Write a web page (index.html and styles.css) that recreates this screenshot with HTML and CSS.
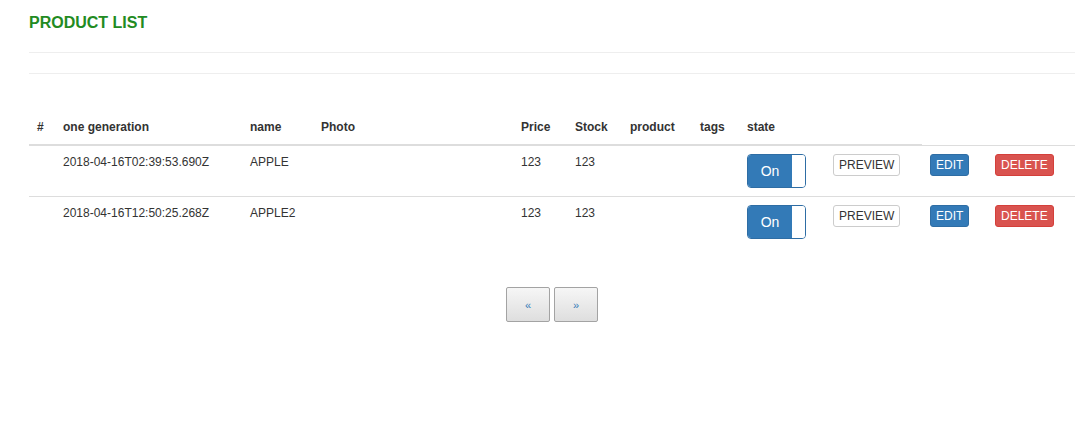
FILE: index.html
```html
<!DOCTYPE html>
<html>
<head>
<meta charset="utf-8">
<link rel="stylesheet" href="styles.css">
</head>
<body>
<div class="page">
  <h4 class="title">PRODUCT LIST</h4>
  <hr class="rule">
  <hr class="rule rule-last">
  <table class="table">
    <colgroup>
      <col class="c-num"><col class="c-date"><col class="c-name"><col class="c-photo"><col class="c-price"><col class="c-stock"><col class="c-product"><col class="c-tags"><col class="c-state"><col class="c-preview"><col class="c-edit"><col class="c-delete">
    </colgroup>
    <thead>
      <tr>
        <th>#</th><th>one generation</th><th>name</th><th class="th-photo">Photo</th><th>Price</th><th>Stock</th><th>product</th><th>tags</th><th>state</th><th></th>
      </tr>
    </thead>
    <tbody>
      <tr>
        <td></td><td>2018-04-16T02:39:53.690Z</td><td>APPLE</td><td></td><td>123</td><td>123</td><td></td><td></td>
        <td><div class="toggle"><span class="toggle-on">On</span><span class="toggle-handle"></span></div></td>
        <td><button class="btn btn-default">PREVIEW</button></td>
        <td><button class="btn btn-primary">EDIT</button></td>
        <td><button class="btn btn-danger">DELETE</button></td>
      </tr>
      <tr>
        <td></td><td>2018-04-16T12:50:25.268Z</td><td>APPLE2</td><td></td><td>123</td><td>123</td><td></td><td></td>
        <td><div class="toggle"><span class="toggle-on">On</span><span class="toggle-handle"></span></div></td>
        <td><button class="btn btn-default">PREVIEW</button></td>
        <td><button class="btn btn-primary">EDIT</button></td>
        <td><button class="btn btn-danger">DELETE</button></td>
      </tr>
    </tbody>
  </table>
  <div class="pager">
    <button class="pg">«</button>
    <button class="pg">»</button>
  </div>
</div>
</body>
</html>
```
FILE: styles.css
```css
* { box-sizing: border-box; }
html, body { margin: 0; padding: 0; background: #fff; }
body {
  font-family: "Liberation Sans", Arial, sans-serif;
  font-size: 12px;
  line-height: 1.42857;
  color: #333;
}
.page { padding: 0 9px 0 29px; }
.title {
  margin: 14px 0 0;
  font-size: 16px;
  line-height: 18px;
  font-weight: bold;
  color: #228b22;
}
.rule {
  margin: 20px 0;
  border: 0;
  border-top: 1px solid #eee;
  height: 0;
}
.rule-last { margin-bottom: 37px; }
.table {
  width: 100%;
  border-collapse: collapse;
  border-spacing: 0;
  table-layout: fixed;
  margin-bottom: 0;
}
.c-num { width: 26px; }
.c-date { width: 187px; }
.c-name { width: 71px; }
.c-photo { width: 200px; }
.c-price { width: 54px; }
.c-stock { width: 55px; }
.c-product { width: 70px; }
.c-tags { width: 47px; }
.c-state { width: 86px; }
.c-preview { width: 97px; }
.c-edit { width: 65px; }
.c-delete { width: 88px; }
.table th {
  text-align: left;
  font-weight: bold;
  padding: 8px;
  vertical-align: bottom;
  border-bottom: 2px solid #ddd;
  white-space: nowrap;
}
.table td {
  padding: 8px;
  vertical-align: top;
  border-top: 1px solid #ddd;
  white-space: nowrap;
}
.toggle {
  display: flex;
  width: 59px;
  height: 34px;
  border: 1px solid #2e6da4;
  border-radius: 4px;
  overflow: hidden;
}
.toggle-on {
  flex: 1;
  background: #337ab7;
  color: #fff;
  font-size: 14px;
  line-height: 32px;
  text-align: center;
}
.toggle-handle {
  width: 13px;
  background: #fff;
}
.btn {
  display: inline-block;
  font-family: inherit;
  font-size: 12px;
  line-height: 18px;
  padding: 1px 5px;
  border: 1px solid transparent;
  border-radius: 3px;
  cursor: pointer;
  margin: 0;
}
.btn-default { background: #fff; color: #333; border-color: #ccc; }
.btn-primary { background: #337ab7; color: #fff; border-color: #2e6da4; }
.btn-danger { background: #d9534f; color: #fff; border-color: #d43f3a; }
.pager {
  display: flex;
  justify-content: center;
  gap: 4px;
  margin: 40px 0 20px;
}
.pg {
  width: 44px;
  height: 35px;
  border: 1px solid #a3a3a3;
  border-radius: 2px;
  background: linear-gradient(#f6f6f6, #dedede);
  color: #337ab7;
  font-family: inherit;
  font-size: 11px;
  padding: 0;
}
```
